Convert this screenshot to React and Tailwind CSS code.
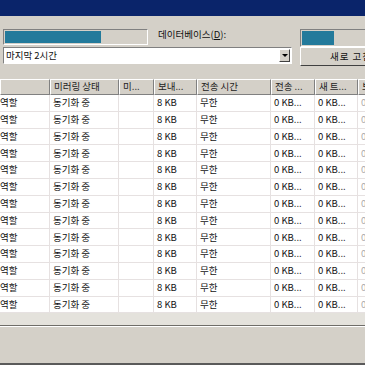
import React from 'react';

const cols = [
    { w: 50, head: '', cell: '역할' },
    { w: 69, head: '미러링 상태', cell: '동기화 중' },
    { w: 35, head: '미...', cell: '' },
    { w: 43, head: '보내...', cell: '8 KB' },
    { w: 74, head: '전송 시간', cell: '무한' },
    { w: 44, head: '전송 ...', cell: '0 KB...' },
    { w: 43, head: '새 트...', cell: '0 KB...' },
    { w: 60, head: '보', cell: '0' },
];

const rows = Array.from({ length: 13 }, (_, i) => i);

const App = () => {
    return (
        <div
            className="w-[365px] h-[365px] overflow-hidden bg-[#d4d0c8] border-t-[16px] border-t-[#0a246a] flex flex-col text-[#111] text-[9.5px] leading-none"
            style={{ fontFamily: '"Noto Sans CJK KR", "Noto Sans", sans-serif' }}
        >
            {/* controls */}
            <div className="flex mt-[13px] ml-[3px] shrink-0">
                <div className="w-[289px] shrink-0 flex flex-col">
                    <div className="flex items-center h-[16px]">
                        <div className="w-[145px] h-[16px] border border-t-[#808080] border-l-[#808080] border-b-white border-r-white p-[1px]">
                            <div className="h-full w-[96px] bg-[#237a9b]" />
                        </div>
                        <span className="ml-[10px] -mt-[4px]">
                            데이터베이스(<span className="underline">D</span>):
                        </span>
                    </div>
                    <div className="mt-[2px] h-[17px] bg-white border border-t-[#808080] border-l-[#808080] border-b-white border-r-white flex items-center">
                        <span className="flex-1 pl-[2px]">마지막 2시간</span>
                        <div className="w-[11px] h-[13px] mr-[1px] bg-[#d4d0c8] border border-t-white border-l-white border-b-[#404040] border-r-[#404040] flex items-center justify-center">
                            <div className="w-0 h-0 border-l-[3px] border-r-[3px] border-t-[3px] border-l-transparent border-r-transparent border-t-black" />
                        </div>
                    </div>
                </div>
                <div className="ml-[8px] w-[80px] flex flex-col shrink-0">
                    <div className="h-[18px] border border-t-[#808080] border-l-[#808080] border-b-white border-r-white p-[1px]">
                        <div className="h-full w-[32px] bg-[#237a9b]" />
                    </div>
                    <div className="h-[19px] border border-t-white border-l-white border-b-[#404040] border-r-[#404040] flex items-center pl-[29px] tracking-[1px] whitespace-nowrap">
                        새로 고침
                    </div>
                </div>
            </div>

            {/* list view */}
            <div className="mt-[13px] flex flex-col shrink-0 bg-white w-[420px]">
                <div className="flex h-[16px] bg-[#d4d0c8]">
                    {cols.map((c, i) => (
                        <div
                            key={i}
                            className="shrink-0 h-full border border-t-white border-l-white border-b-[#808080] border-r-[#808080] flex items-center pl-[3px] text-[#222]"
                            style={{ width: c.w }}
                        >
                            {c.head}
                        </div>
                    ))}
                </div>
                {rows.map((r) => (
                    <div key={r} className="flex h-[16.8px] border-b border-[#e6e1e1]">
                        {cols.map((c, i) => (
                            <div
                                key={i}
                                className={`shrink-0 h-full border-r border-[#e6e1e1] flex items-center ${i === 0 ? 'pl-0' : 'pl-[3px]'} ${i === 7 ? 'text-[#aaa]' : ''}`}
                                style={{ width: c.w }}
                            >
                                {c.cell}
                            </div>
                        ))}
                    </div>
                ))}
            </div>

            {/* horizontal strip + bottom panel */}
            <div className="h-[12px] shrink-0 bg-[#e4e2dc]" />
            <div className="h-[1px] shrink-0 bg-[#6f6d68]" />
            <div className="h-[1px] shrink-0 bg-white" />
            <div className="flex-1 bg-[#d4d0c8]" />
            <div className="h-[2px] shrink-0 bg-[#5a5a5a]" />
        </div>
    );
};

export default App;
